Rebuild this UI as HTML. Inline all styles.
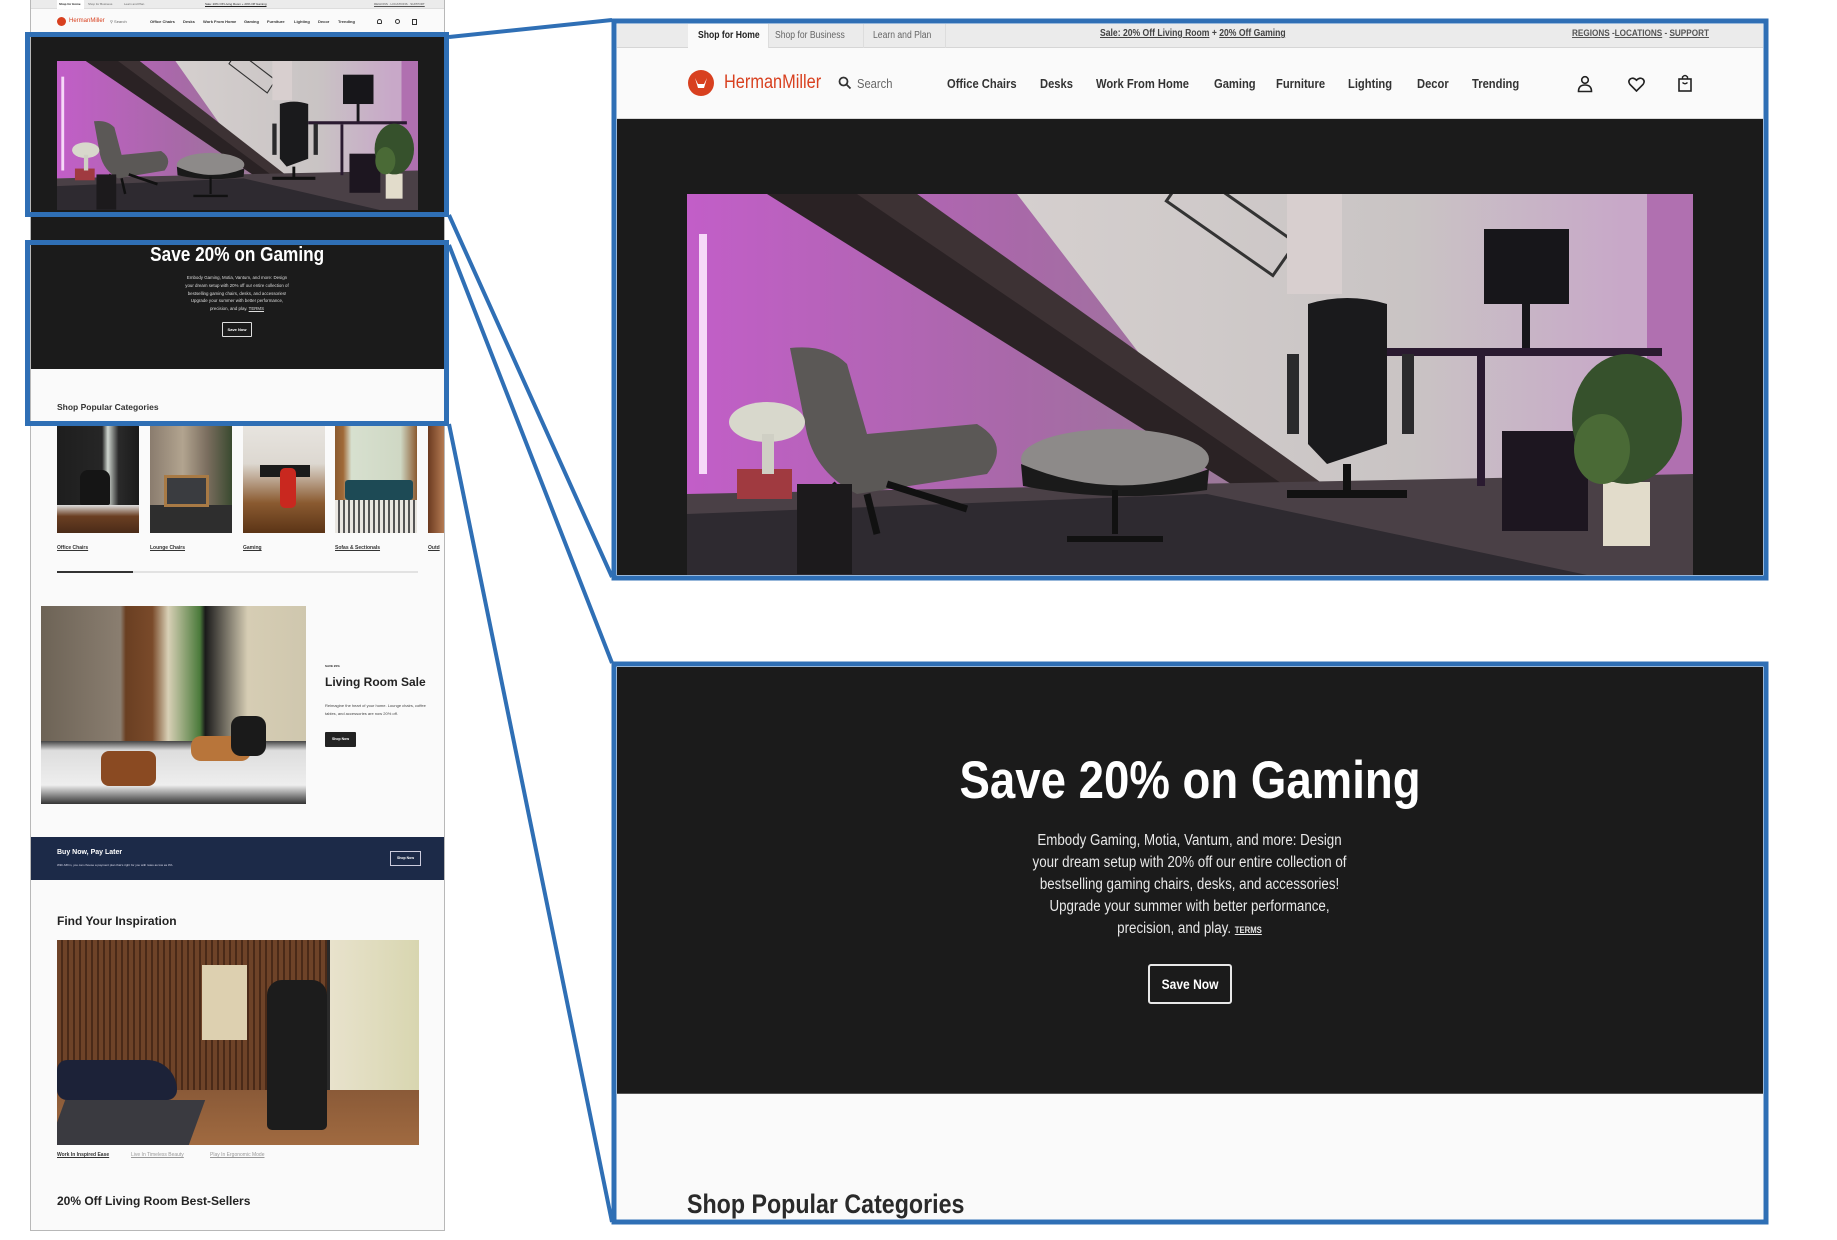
<!DOCTYPE html>
<html><head><meta charset="utf-8">
<style>
*{margin:0;padding:0;box-sizing:border-box}
body{width:1837px;height:1240px;background:#fff;position:relative;overflow:hidden;font-family:"Liberation Sans",sans-serif;color:#222}
.a{position:absolute}
.t{position:absolute;white-space:nowrap}
.u{text-decoration:underline}
.c{text-align:center}
.n{position:absolute;white-space:nowrap;font-size:13px;font-weight:bold;color:#333;transform:scaleX(.86);transform-origin:0 0}
.sx{display:inline-block;transform:scaleX(.86)}
</style></head><body>

<!-- ============ LEFT MINI PAGE ============ -->
<div class="a" style="left:30px;top:0;width:415px;height:1231px;background:#fafafa;border:1px solid #b8b8b8"></div>
<div class="a" style="left:31px;top:0;width:413px;height:9px;background:#ebebeb;border-bottom:1px solid #ddd"></div>
<div class="a" style="left:57px;top:0;width:27px;height:9px;background:#fff"></div>
<div class="t" style="left:59px;top:2px;font-size:3px;font-weight:bold">Shop for Home</div>
<div class="t" style="left:88px;top:2px;font-size:3px;color:#666">Shop for Business</div>
<div class="t" style="left:124px;top:2px;font-size:3px;color:#666">Learn and Plan</div>
<div class="t u" style="left:205px;top:2px;font-size:3px">Sale: 20% Off Living Room + 20% Off Gaming</div>
<div class="t u" style="left:374px;top:2px;font-size:3px;color:#555">REGIONS · LOCATIONS · SUPPORT</div>
<div class="a" style="left:57px;top:17px;width:9px;height:9px;border-radius:50%;background:#d8401f"></div>
<div class="t" style="left:69px;top:18px;font-size:6px;color:#d8401f">HermanMiller</div>
<div class="t" style="left:110px;top:19px;font-size:4px;color:#666">⚲ Search</div>
<div class="t" style="left:150px;top:19px;font-size:4px;font-weight:bold;color:#333">Office Chairs</div>
<div class="t" style="left:183px;top:19px;font-size:4px;font-weight:bold;color:#333">Desks</div>
<div class="t" style="left:203px;top:19px;font-size:4px;font-weight:bold;color:#333">Work From Home</div>
<div class="t" style="left:244px;top:19px;font-size:4px;font-weight:bold;color:#333">Gaming</div>
<div class="t" style="left:267px;top:19px;font-size:4px;font-weight:bold;color:#333">Furniture</div>
<div class="t" style="left:294px;top:19px;font-size:4px;font-weight:bold;color:#333">Lighting</div>
<div class="t" style="left:318px;top:19px;font-size:4px;font-weight:bold;color:#333">Decor</div>
<div class="t" style="left:338px;top:19px;font-size:4px;font-weight:bold;color:#333">Trending</div>
<div class="a" style="left:377px;top:19px;width:5px;height:5px;border:1px solid #333;border-radius:50% 50% 1px 1px"></div>
<div class="a" style="left:395px;top:19px;width:5px;height:5px;border:1px solid #333;border-radius:50%"></div>
<div class="a" style="left:412px;top:19px;width:5px;height:6px;border:1px solid #333"></div>

<div class="a" style="left:31px;top:32px;width:413px;height:337px;background:#1b1b1b"></div>
<svg class="a" style="left:57px;top:61px" width="361" height="149" viewBox="0 0 1006 381" preserveAspectRatio="none">
<use href="#hero"/></svg>
<div class="t c" style="left:31px;top:244px;width:413px;font-size:20px;font-weight:bold;color:#fff"><span class="sx">Save 20% on Gaming</span></div>
<div class="a c" style="left:137px;top:274px;width:200px;font-size:4.4px;line-height:7.8px;color:#ddd;white-space:nowrap">Embody Gaming, Motia, Vantum, and more: Design<br>your dream setup with 20% off our entire collection of<br>bestselling gaming chairs, desks, and accessories!<br>Upgrade your summer with better performance,<br>precision, and play. <u>TERMS</u></div>
<div class="a" style="left:222px;top:322px;width:30px;height:15px;border:1px solid #ddd;border-radius:1px"></div>
<div class="t c" style="left:222px;top:327px;width:30px;font-size:4px;color:#fff;font-weight:bold">Save Now</div>
<div class="t" style="left:57px;top:402px;font-size:8.5px;font-weight:bold;color:#333">Shop Popular Categories</div>

<!-- category images -->
<div class="a" style="left:57px;top:426px;width:82px;height:107px;background:linear-gradient(90deg,#1e1e1e 0,#262626 55%,#cfd6cf 62%,#2a2a2a 75%,#1a1a1a);"></div>
<div class="a" style="left:57px;top:505px;width:82px;height:28px;background:linear-gradient(#ddd,#6b3f22 40%,#4a2b18)"></div>
<div class="a" style="left:80px;top:470px;width:30px;height:35px;background:#151515;border-radius:8px 8px 2px 2px"></div>
<div class="a" style="left:150px;top:426px;width:82px;height:107px;background:linear-gradient(90deg,#8a7c6e,#b2a48f 40%,#7a6d5e 70%,#3a4a30);"></div>
<div class="a" style="left:150px;top:505px;width:82px;height:28px;background:#2e2e2e"></div>
<div class="a" style="left:164px;top:475px;width:45px;height:32px;background:#3a3c40;border:3px solid #a87a45"></div>
<div class="a" style="left:243px;top:426px;width:82px;height:107px;background:linear-gradient(#e7e4df 0,#ddd8d1 35%,#8a5a30 72%,#5b3416)"></div>
<div class="a" style="left:260px;top:465px;width:50px;height:12px;background:#1b1b1b"></div>
<div class="a" style="left:280px;top:468px;width:16px;height:40px;background:#c9281f;border-radius:5px"></div>
<div class="a" style="left:335px;top:426px;width:82px;height:107px;background:linear-gradient(90deg,#8a5a30 0,#a06a38 10%,#d7e0cf 20%,#cfd8c4 80%,#8a5a30)"></div>
<div class="a" style="left:335px;top:500px;width:82px;height:33px;background:repeating-linear-gradient(90deg,#e9e6e0 0 3px,#555 3px 5px)"></div>
<div class="a" style="left:345px;top:480px;width:68px;height:20px;background:#1d4a55;border-radius:3px"></div>
<div class="a" style="left:428px;top:426px;width:16px;height:107px;background:linear-gradient(90deg,#6b3a20,#b47a52)"></div>
<div class="t u" style="left:57px;top:545px;font-size:5px;font-weight:bold;color:#333">Office Chairs</div>
<div class="t u" style="left:150px;top:545px;font-size:5px;font-weight:bold;color:#333">Lounge Chairs</div>
<div class="t u" style="left:243px;top:545px;font-size:5px;font-weight:bold;color:#333">Gaming</div>
<div class="t u" style="left:335px;top:545px;font-size:5px;font-weight:bold;color:#333">Sofas &amp; Sectionals</div>
<div class="t u" style="left:428px;top:545px;font-size:5px;font-weight:bold;color:#333">Outd</div>
<div class="a" style="left:57px;top:571px;width:361px;height:2px;background:#e2e2e2"></div>
<div class="a" style="left:57px;top:571px;width:76px;height:2px;background:#333"></div>

<!-- living room -->
<div class="a" style="left:41px;top:606px;width:265px;height:198px;overflow:hidden;background:linear-gradient(90deg,#6d6356 0,#8a7e70 30%,#6a3f22 32%,#7a4a2a 42%,#d8d0b6 48%,#4a7a3a 60%,#1a1a1a 62%,#d6cdb4 78%,#cfc7ae 100%)">
<div class="a" style="left:0;top:135px;width:265px;height:63px;background:linear-gradient(#444 0,#ddd 15%,#eee 70%,#333 100%)"></div>
<div class="a" style="left:60px;top:145px;width:55px;height:35px;background:#8a4a22;border-radius:8px"></div>
<div class="a" style="left:150px;top:130px;width:60px;height:25px;background:#b8753a;border-radius:10px"></div>
<div class="a" style="left:190px;top:110px;width:35px;height:40px;background:#1a1a1a;border-radius:10px"></div>
</div>
<div class="t" style="left:325px;top:664px;font-size:3px;font-weight:bold">SAVE 20%</div>
<div class="t" style="left:325px;top:675px;font-size:12px;font-weight:bold;color:#222">Living Room Sale</div>
<div class="a" style="left:325px;top:702px;width:112px;font-size:4px;line-height:8px;color:#444">Reimagine the heart of your home. Lounge chairs, coffee tables, and accessories are now 20% off.</div>
<div class="a" style="left:325px;top:732px;width:31px;height:15px;background:#222;border-radius:1px"></div>
<div class="t c" style="left:325px;top:737px;width:31px;font-size:3.5px;color:#fff;font-weight:bold">Shop Now</div>

<!-- navy band -->
<div class="a" style="left:31px;top:837px;width:413px;height:43px;background:#1c2a48"></div>
<div class="t" style="left:57px;top:849px;font-size:7px;font-weight:bold;color:#fff">Buy Now, Pay Later</div>
<div class="t" style="left:57px;top:863px;font-size:3px;color:#dde">With Affirm, you can choose a payment plan that's right for you with rates as low as 0%.</div>
<div class="a" style="left:390px;top:851px;width:31px;height:15px;border:1px solid #ccd"></div>
<div class="t c" style="left:390px;top:856px;width:31px;font-size:3.5px;color:#fff;font-weight:bold">Shop Now</div>

<div class="t" style="left:57px;top:914px;font-size:12px;font-weight:bold;color:#222">Find Your Inspiration</div>
<div class="a" style="left:57px;top:940px;width:362px;height:205px;overflow:hidden;background:repeating-linear-gradient(90deg,#6e4328 0 4px,#4a2a18 4px 6px)">
<div class="a" style="left:270px;top:0;width:92px;height:205px;background:linear-gradient(90deg,#2a2a2a 0 3px,#e8e2cc 3px,#d8d6b0)"></div>
<div class="a" style="left:0;top:150px;width:362px;height:55px;background:linear-gradient(#8a5a38,#a06a40)"></div>
<div class="a" style="left:0;top:160px;width:140px;height:45px;background:#3a3a40;transform:skewX(-20deg)"></div>
<div class="a" style="left:145px;top:25px;width:45px;height:75px;background:#ddd0b0"></div>
<div class="a" style="left:210px;top:40px;width:60px;height:150px;background:#1c1c1c;border-radius:15px 15px 5px 5px"></div>
<div class="a" style="left:0;top:120px;width:120px;height:40px;background:#1c2238;border-radius:10px 30px 10px 10px"></div>
</div>
<div class="t u" style="left:57px;top:1152px;font-size:5px;font-weight:bold;color:#333">Work In Inspired Ease</div>
<div class="t u" style="left:131px;top:1152px;font-size:5px;color:#999">Live In Timeless Beauty</div>
<div class="t u" style="left:210px;top:1152px;font-size:5px;color:#999">Play In Ergonomic Mode</div>
<div class="t" style="left:57px;top:1194px;font-size:12px;font-weight:bold;color:#222">20% Off Living Room Best-Sellers</div>

<!-- ============ RIGHT BOX 1 ============ -->
<div class="a" style="left:617px;top:24px;width:1146px;height:551px;background:#fafafa;overflow:hidden">
  <div class="a" style="left:0;top:0;width:1146px;height:24px;background:#ebebeb;border-bottom:1px solid #d6d6d6"></div>
  <div class="a" style="left:71px;top:0;width:81px;height:24px;background:#fafafa;border-right:1px solid #ddd"></div>
  <div class="a" style="left:152px;top:0;width:95px;height:24px;border-right:1px solid #ddd"></div>
  <div class="a" style="left:247px;top:0;width:82px;height:24px;border-right:1px solid #ddd"></div>
  <div class="t" style="left:81px;top:6px;font-size:10px;font-weight:bold;color:#222"><span class="sx" style="transform-origin:0 0">Shop for Home</span></div>
  <div class="t" style="left:158px;top:6px;font-size:10px;color:#666"><span class="sx" style="transform-origin:0 0">Shop for Business</span></div>
  <div class="t" style="left:256px;top:6px;font-size:10px;color:#666"><span class="sx" style="transform-origin:0 0">Learn and Plan</span></div>
  <div class="t" style="left:483px;top:4px;font-size:10px;font-weight:bold;color:#444"><span class="sx" style="transform-origin:0 0"><span class="u">Sale: 20% Off Living Room</span> + <span class="u">20% Off Gaming</span></span></div>
  <div class="t" style="left:955px;top:4px;font-size:9.5px;font-weight:bold;color:#555"><span class="sx" style="transform-origin:0 0"><span class="u">REGIONS</span> -<span class="u">LOCATIONS</span> - <span class="u">SUPPORT</span></span></div>

  <div class="a" style="left:71px;top:46px;width:26px;height:26px;border-radius:50%;background:#d8401f"></div>
  <svg class="a" style="left:71px;top:46px" width="26" height="26" viewBox="0 0 26 26"><path d="M7 8 L10 18 L16 18 L19 8 L16 14 L10 14 Z" fill="#fff"/></svg>
  <div class="t" style="left:107px;top:48px;font-size:19px;color:#d8401f;transform:scaleX(.86);transform-origin:0 0">HermanMiller</div>
  <svg class="a" style="left:221px;top:52px" width="14" height="14" viewBox="0 0 14 14"><circle cx="5.5" cy="5.5" r="4" fill="none" stroke="#333" stroke-width="1.8"/><path d="M8.5 8.5 L12.5 12.5" stroke="#333" stroke-width="1.8"/></svg>
  <div class="t" style="left:240px;top:52px;font-size:13px;color:#666;transform:scaleX(.86);transform-origin:0 0">Search</div>
  <div class="n" style="left:330px;top:52px">Office Chairs</div>
  <div class="n" style="left:423px;top:52px">Desks</div>
  <div class="n" style="left:479px;top:52px">Work From Home</div>
  <div class="n" style="left:597px;top:52px">Gaming</div>
  <div class="n" style="left:659px;top:52px">Furniture</div>
  <div class="n" style="left:731px;top:52px">Lighting</div>
  <div class="n" style="left:800px;top:52px">Decor</div>
  <div class="n" style="left:855px;top:52px">Trending</div>
  <svg class="a" style="left:960px;top:51px" width="16" height="18" viewBox="0 0 16 18"><circle cx="8" cy="5" r="3.3" fill="none" stroke="#222" stroke-width="1.6"/><path d="M1.5 16.5 Q1.5 10 8 10 Q14.5 10 14.5 16.5 Z" fill="none" stroke="#222" stroke-width="1.6"/></svg>
  <svg class="a" style="left:1011px;top:53px" width="17" height="15" viewBox="0 0 17 15"><path d="M8.5 14 L2 7.5 Q-0.5 4 2.5 1.8 Q5.5 0 8.5 3.2 Q11.5 0 14.5 1.8 Q17.5 4 15 7.5 Z" fill="none" stroke="#222" stroke-width="1.6"/></svg>
  <svg class="a" style="left:1061px;top:50px" width="14" height="18" viewBox="0 0 14 18"><rect x="1" y="5" width="12" height="12" fill="none" stroke="#222" stroke-width="1.6"/><path d="M4.5 5 V3 Q7 0 9.5 3 V5 M4.5 8.5 Q7 11 9.5 8.5" fill="none" stroke="#222" stroke-width="1.4"/></svg>
  <div class="a" style="left:0;top:94px;width:1146px;height:1px;background:#d9d9d9"></div>
  <div class="a" style="left:0;top:95px;width:1146px;height:456px;background:#1b1b1b"></div>
  <svg class="a" style="left:70px;top:170px" width="1006" height="381" viewBox="0 0 1006 381" preserveAspectRatio="none">
   <g id="hero">
    <rect width="1006" height="381" fill="#c3bcbd"/>
    <rect x="300" y="0" width="706" height="381" fill="url(#wall)"/>
    <polygon points="0,0 330,0 560,300 0,300" fill="url(#pink)"/>
    <polygon points="80,0 230,0 640,300 560,300" fill="#2a2224"/>
    <polygon points="170,0 230,0 650,300 610,300" fill="#3d3234"/>
    <rect x="960" y="0" width="46" height="381" fill="#b070b0"/>
    <polygon points="0,300 1006,280 1006,381 0,381" fill="#4a4046"/>
    <polygon points="0,320 520,300 900,381 0,381" fill="#2e2a30"/>
    <rect x="12" y="40" width="8" height="240" fill="#f6d8f8"/>
    <rect x="797" y="35" width="85" height="75" fill="#17161a"/>
    <rect x="835" y="110" width="8" height="48" fill="#17161a"/>
    <rect x="700" y="154" width="275" height="8" fill="#2a1a30"/>
    <rect x="790" y="162" width="8" height="130" fill="#2a1a30"/>
    <rect x="815" y="237" width="86" height="100" fill="#1d1620"/>
    <path d="M621 110 Q660 98 700 110 L700 250 L640 270 L621 250 Z" fill="#1a1a1c"/>
    <path d="M600 300 L720 300 M660 270 L660 300" stroke="#111" stroke-width="8"/>
    <rect x="600" y="160" width="12" height="80" fill="#2a2a2c"/>
    <rect x="715" y="160" width="12" height="80" fill="#2a2a2c"/>
    <path d="M103 154 Q140 150 160 170 L180 240 L290 230 Q324 250 300 280 L170 300 Q130 280 120 240 Z" fill="#5b5856"/>
    <path d="M150 290 L120 320 M200 290 L280 315 M180 300 L190 340" stroke="#111" stroke-width="7"/>
    <ellipse cx="428" cy="265" rx="94" ry="30" fill="#8d8a89"/>
    <path d="M334 270 Q428 310 522 275 L520 296 Q428 310 336 292 Z" fill="#1a1a1a"/>
    <path d="M428 296 L428 340 M380 345 L476 345" stroke="#111" stroke-width="6"/>
    <rect x="50" y="275" width="55" height="30" fill="#a03a40"/>
    <ellipse cx="80" cy="228" rx="38" ry="20" fill="#d8d8cc"/>
    <rect x="75" y="240" width="12" height="40" fill="#cfcfc4"/>
    <rect x="110" y="290" width="55" height="90" fill="#1c1a1c"/>
    <rect x="916" y="288" width="47" height="64" fill="#e2dccb"/>
    <ellipse cx="940" cy="225" rx="55" ry="65" fill="#36512c"/>
    <ellipse cx="915" cy="255" rx="28" ry="35" fill="#4a6a36"/>
    <rect x="480" y="5" width="130" height="40" fill="none" stroke="#333" stroke-width="3" transform="rotate(35 540 25)"/>
    <rect x="600" y="0" width="55" height="100" fill="#d8cfcf"/>
   </g>
   <defs>
    <linearGradient id="pink" x1="0" y1="0" x2="1" y2="0"><stop offset="0" stop-color="#c25ec8"/><stop offset=".6" stop-color="#a869a8"/><stop offset="1" stop-color="#9a7a98"/></linearGradient>
    <linearGradient id="wall" x1="0" y1="0" x2="1" y2="0"><stop offset="0" stop-color="#d6d0cf"/><stop offset=".6" stop-color="#c9c4c4"/><stop offset=".9" stop-color="#c8a8c8"/></linearGradient>
   </defs>
  </svg>
</div>

<!-- ============ RIGHT BOX 2 ============ -->
<div class="a" style="left:617px;top:667px;width:1146px;height:552px;background:#fafafa;overflow:hidden">
  <div class="a" style="left:0;top:0;width:1146px;height:427px;background:#1b1b1b;border-bottom:1px solid #555"></div>
  <div class="t c" style="left:0;top:84px;width:1146px;font-size:53px;line-height:60px;font-weight:bold;color:#fff"><span class="sx">Save 20% on Gaming</span></div>
  <div class="a c" style="left:273px;top:163px;width:600px;font-size:15.5px;line-height:22px;color:#e8e8e8;white-space:nowrap"><span class="sx">Embody Gaming, Motia, Vantum, and more: Design<br>your dream setup with 20% off our entire collection of<br>bestselling gaming chairs, desks, and accessories!<br>Upgrade your summer with better performance,<br>precision, and play. <u style="font-size:9px;font-weight:bold">TERMS</u></span></div>
  <div class="a" style="left:531px;top:297px;width:84px;height:40px;border:2px solid #e8e8e8;border-radius:3px"></div>
  <div class="t c" style="left:531px;top:309px;width:84px;font-size:14px;font-weight:bold;color:#fff"><span class="sx">Save Now</span></div>
  <div class="t" style="left:70px;top:522px;font-size:27px;font-weight:bold;color:#2a2a2a;transform:scaleX(.86);transform-origin:0 0">Shop Popular Categories</div>
</div>

<!-- ============ BLUE OVERLAYS ============ -->
<svg class="a" style="left:0;top:0" width="1837" height="1240">
 <g fill="none" stroke="#2f6fb5" stroke-width="5">
  <rect x="27.5" y="34.5" width="419" height="180"/>
  <rect x="27.5" y="242.5" width="419" height="181"/>
  <rect x="614" y="21" width="1152" height="557"/>
  <rect x="614" y="664" width="1152" height="558"/>
 </g>
 <g stroke="#2f6fb5" stroke-width="4">
  <line x1="449" y1="37" x2="612" y2="20"/>
  <line x1="449" y1="215" x2="612" y2="577"/>
  <line x1="449" y1="245" x2="612" y2="663"/>
  <line x1="449" y1="424" x2="612" y2="1222"/>
 </g>
</svg>
</body></html>
